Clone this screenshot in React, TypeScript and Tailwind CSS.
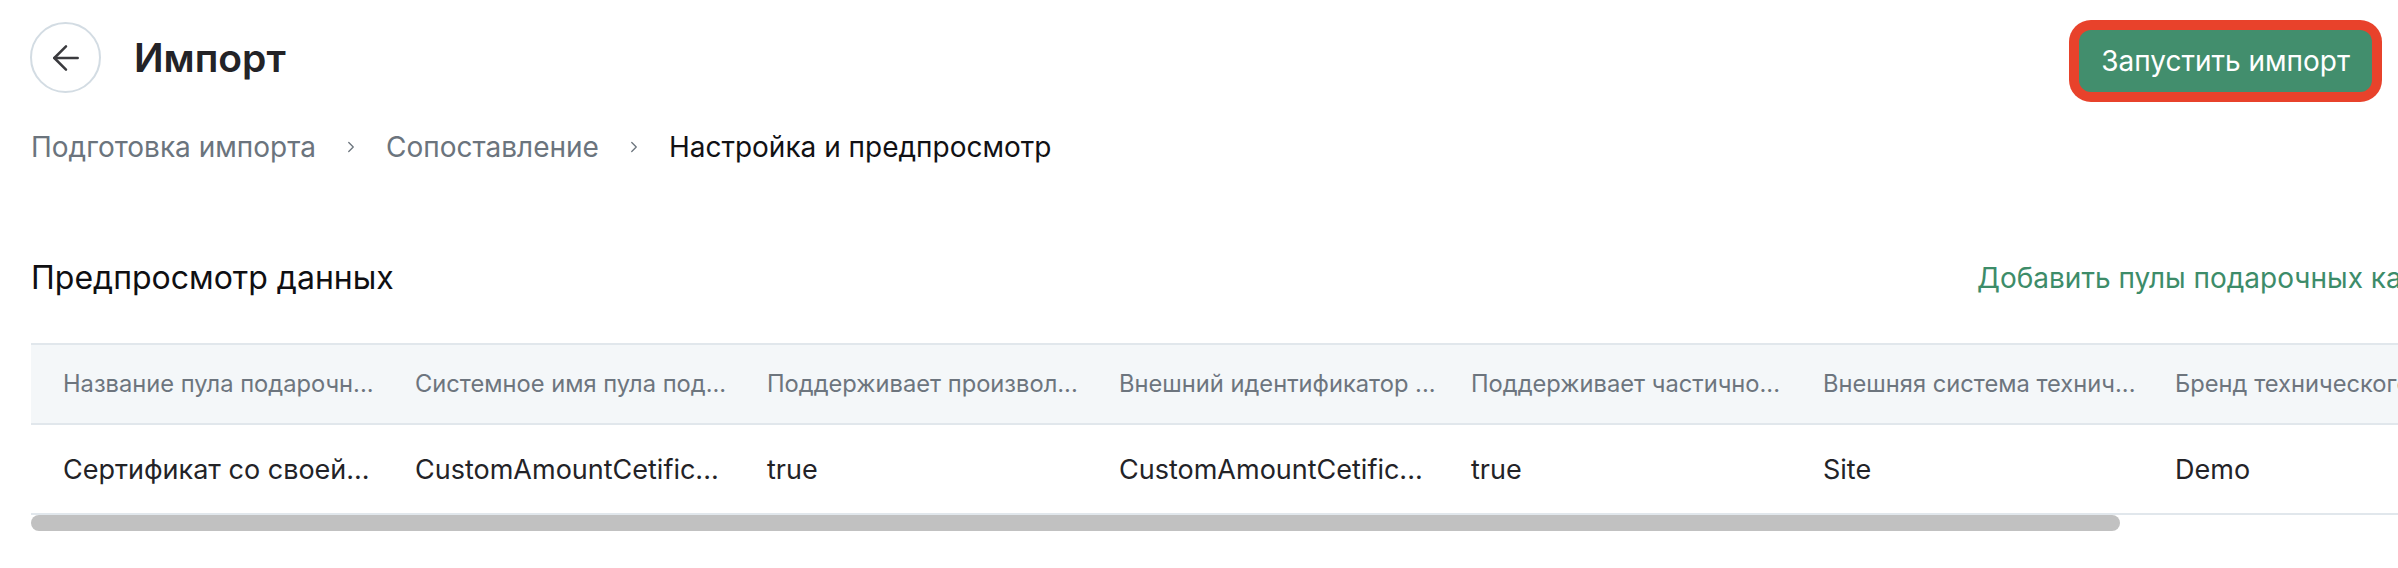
import React from 'react';
import { ArrowLeft, ChevronRight } from 'lucide-react';

const columns = [
    { title: 'Название пула подарочн...', value: 'Сертификат со своей...' },
    { title: 'Системное имя пула под...', value: 'CustomAmountCetific...' },
    { title: 'Поддерживает произвол...', value: 'true' },
    { title: 'Внешний идентификатор ...', value: 'CustomAmountCetific...' },
    { title: 'Поддерживает частично...', value: 'true' },
    { title: 'Внешняя система технич...', value: 'Site' },
    { title: 'Бренд технического ...', value: 'Demo' },
    { title: 'Тип подарочной карты', value: 'Electronic' },
];

const steps = ['Подготовка импорта', 'Сопоставление', 'Настройка и предпросмотр'];

const App = () => {
    return (
        <div className="min-h-screen w-full overflow-hidden bg-white font-['Inter',sans-serif] text-[#1f1f23]">
            {/* Header */}
            <div className="flex items-start justify-between pl-[30px] pr-[16px] pt-[20px]">
                <div className="mt-[2px] flex items-center gap-[33px]">
                    <button className="flex h-[71px] w-[71px] items-center justify-center rounded-full border-2 border-[#d3dce3] text-[#3a3a3e]">
                        <ArrowLeft size={40} strokeWidth={1.5} />
                    </button>
                    <h1 className="text-[39px] font-semibold leading-[46px] text-[#232327]">Импорт</h1>
                </div>
                <div className="rounded-[22px] bg-[#e8422b] p-[10px]">
                    <button className="h-[62px] rounded-[12px] bg-[#428e6d] px-[22px] text-[28px] leading-[36px] text-white">
                        Запустить импорт
                    </button>
                </div>
            </div>

            {/* Breadcrumbs */}
            <div className="mt-[27px] flex items-center pl-[31px] text-[28px] leading-[36px]">
                {steps.map((step, i) => (
                    <div key={step} className="flex items-center">
                        <span className={i === steps.length - 1 ? 'text-[#111114]' : 'text-[#6b747d]'}>{step}</span>
                        {i < steps.length - 1 && (
                            <ChevronRight size={18} strokeWidth={1.75} className="mx-[26px] text-[#6b747d]" />
                        )}
                    </div>
                ))}
            </div>

            {/* Preview */}
            <div className="mt-[95px] w-[2900px] pl-[31px]">
                <div className="flex items-center">
                    <h2 className="w-[1946px] shrink-0 text-[32px] leading-[36px] text-[#0f0f12]">
                        Предпросмотр данных
                    </h2>
                    <a className="whitespace-nowrap text-[28px] leading-[36px] text-[#3d8c69]">
                        Добавить пулы подарочных карт
                    </a>
                </div>

                <div className="mt-[47px]">
                    <div className="flex h-[82px] items-center border-y-2 border-[#e1e7ec] bg-[#f4f7f9] pl-[16px]">
                        {columns.map((col) => (
                            <div key={col.title} className="w-[352px] shrink-0 truncate pl-[16px] pr-[12px] text-[23.7px] text-[#6d757e]">
                                {col.title}
                            </div>
                        ))}
                    </div>
                    <div className="flex h-[90px] items-center border-b-2 border-[#e1e7ec] pl-[16px]">
                        {columns.map((col) => (
                            <div key={col.title} className="w-[352px] shrink-0 truncate pl-[16px] pr-[12px] pt-[3px] text-[27px] text-[#232327]">
                                {col.value}
                            </div>
                        ))}
                    </div>
                    {/* scrollbar */}
                    <div className="h-[16px] w-[2367px]">
                        <div className="h-full w-[2089px] rounded-full bg-[#c1c1c1]" />
                    </div>
                </div>
            </div>
        </div>
    );
};

export default App;
